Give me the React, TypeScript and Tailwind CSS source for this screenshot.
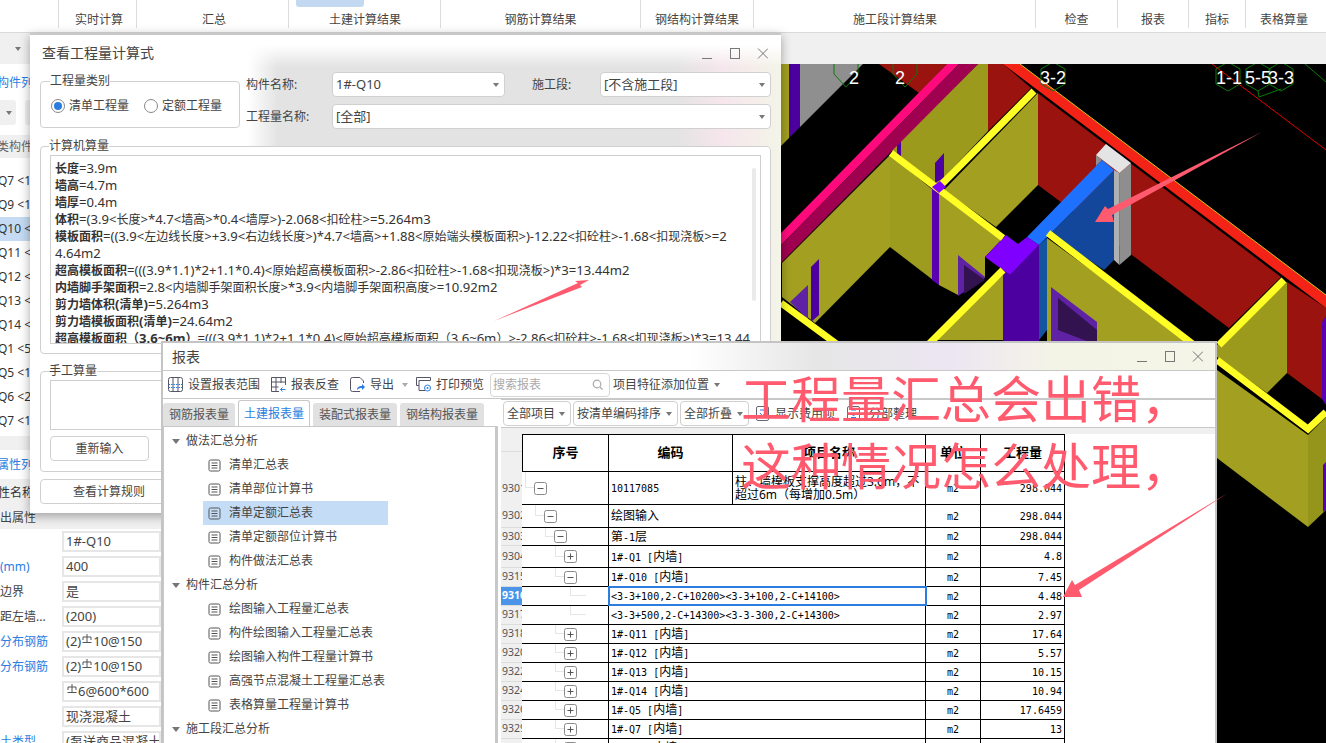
import React from 'react';

const ribbon = [
  { w: 78, label: '实时计算', pad: 3 },
  { w: 152, label: '汇总', pad: 3 },
  { w: 152, label: '土建计算结果', active: true, pad: 1 },
  { w: 200, label: '钢筋计算结果', pad: 0 },
  { w: 113, label: '钢结构计算结果', pad: 0 },
  { w: 282, label: '施工段计算结果', pad: 1 },
  { w: 82, label: '检查', pad: 0 },
  { w: 71, label: '报表', pad: 0 },
  { w: 57, label: '指标', pad: 0 },
  { w: 77, label: '表格算量', pad: 0 },
];

const memberRows = ['Q7 <1', 'Q9 <1', 'Q10 <1', 'Q11 <1', 'Q12 <1', 'Q13 <1', 'Q14 <1', 'Q1 <5', 'Q5 <1', 'Q6 <2', 'Q7 <1'];

const calcLines = [
  ['长度', '=3.9m'],
  ['墙高', '=4.7m'],
  ['墙厚', '=0.4m'],
  ['体积', '=(3.9<长度>*4.7<墙高>*0.4<墙厚>)-2.068<扣砼柱>=5.264m3'],
  ['模板面积', '=((3.9<左边线长度>+3.9<右边线长度>)*4.7<墙高>+1.88<原始端头模板面积>)-12.22<扣砼柱>-1.68<扣现浇板>=2'],
  ['', '4.64m2'],
  ['超高模板面积', '=(((3.9*1.1)*2+1.1*0.4)<原始超高模板面积>-2.86<扣砼柱>-1.68<扣现浇板>)*3=13.44m2'],
  ['内墙脚手架面积', '=2.8<内墙脚手架面积长度>*3.9<内墙脚手架面积高度>=10.92m2'],
  ['剪力墙体积(清单)', '=5.264m3'],
  ['剪力墙模板面积(清单)', '=24.64m2'],
  ['超高模板面积（3.6~6m）', '=(((3.9*1.1)*2+1.1*0.4)<原始超高模板面积（3.6~6m）>-2.86<扣砼柱>-1.68<扣现浇板>)*3=13.44'],
];

const reportTree = [
  { title: '做法汇总分析', items: ['清单汇总表', '清单部位计算书', '清单定额汇总表', '清单定额部位计算书', '构件做法汇总表'] },
  { title: '构件汇总分析', items: ['绘图输入工程量汇总表', '构件绘图输入工程量汇总表', '绘图输入构件工程量计算书', '高强节点混凝土工程量汇总表', '表格算量工程量计算书'] },
  { title: '施工段汇总分析', items: [] },
];

type Row = { no: string; h: number; level: number; kind: '-' | '+' | ''; name: string; unit: string; qty: string; sel?: boolean };

const rows: Row[] = [
  { no: '9302', h: 23, level: 1, kind: '-', name: '绘图输入', unit: 'm2', qty: '298.044' },
  { no: '9303', h: 18, level: 2, kind: '-', name: '第-1层', unit: 'm2', qty: '298.044' },
  { no: '9304', h: 22, level: 3, kind: '+', name: '1#-Q1 [内墙]', unit: 'm2', qty: '4.8' },
  { no: '9315', h: 19, level: 3, kind: '-', name: '1#-Q10 [内墙]', unit: 'm2', qty: '7.45' },
  { no: '9316', h: 19, level: 4, kind: '', name: '<3-3+100,2-C+10200><3-3+100,2-C+14100>', unit: 'm2', qty: '4.48', sel: true },
  { no: '9317', h: 19, level: 4, kind: '', name: '<3-3+500,2-C+14300><3-3-300,2-C+14300>', unit: 'm2', qty: '2.97' },
  { no: '9318', h: 19, level: 3, kind: '+', name: '1#-Q11 [内墙]', unit: 'm2', qty: '17.64' },
  { no: '9320', h: 19, level: 3, kind: '+', name: '1#-Q12 [内墙]', unit: 'm2', qty: '5.57' },
  { no: '9322', h: 19, level: 3, kind: '+', name: '1#-Q13 [内墙]', unit: 'm2', qty: '10.15' },
  { no: '9324', h: 19, level: 3, kind: '+', name: '1#-Q14 [内墙]', unit: 'm2', qty: '10.94' },
  { no: '9326', h: 19, level: 3, kind: '+', name: '1#-Q5 [内墙]', unit: 'm2', qty: '17.6459' },
  { no: '9329', h: 19, level: 3, kind: '+', name: '1#-Q7 [内墙]', unit: 'm2', qty: '13' },
  { no: '9331', h: 19, level: 3, kind: '+', name: '1#-Q9 [内墙]', unit: 'm2', qty: '13' },
];

const Caret = ({ className = '' }: { className?: string }) => (
  <span className={`inline-block w-0 h-0 border-l-[3px] border-r-[3px] border-t-[4px] border-l-transparent border-r-transparent border-t-[#777] ${className}`} />
);

const WinControls = () => (
  <svg width="66" height="12" viewBox="0 0 66 12" fill="none" stroke="#777" strokeWidth="1">
    <path d="M0 10.5h10" />
    <rect x="28.5" y="0.5" width="9" height="10" />
    <path d="M56 0.5l10 10M66 0.5l-10 10" />
  </svg>
);

const Rebar = () => (
  <svg width="10" height="10" viewBox="0 0 10 10" fill="none" stroke="#555" strokeWidth="1" className="inline-block mb-[5px] mx-[1px]">
    <path d="M1 6V3h8v3M5 0v8M0.5 8.5h9" />
  </svg>
);

const DocIcon = () => (
  <svg width="13" height="13" viewBox="0 0 13 13" fill="none" stroke="#555" strokeWidth="1" className="shrink-0">
    <rect x="1" y="1" width="11" height="11" rx="1.5" />
    <path d="M3.5 4h6M3.5 6.5h6M3.5 9h6" />
  </svg>
);

const Toggle = ({ kind }: { kind: '-' | '+' }) => (
  <svg width="13" height="13" viewBox="0 0 13 13" fill="#fff" stroke="#8a8a8a" strokeWidth="1" className="shrink-0">
    <rect x="0.5" y="0.5" width="12" height="12" rx="2" />
    <path d={kind === '-' ? 'M3.5 6.5h6' : 'M3.5 6.5h6M6.5 3.5v6'} stroke="#555" />
  </svg>
);

const CheckIcon = () => (
  <svg width="14" height="15" viewBox="0 0 14 15" fill="none" className="shrink-0">
    <rect x="0.5" y="0.5" width="12" height="14" rx="1.5" stroke="#667" />
    <path d="M4 4h5M4 7l2.5 3L9 7M4 11.5h5" stroke="#2b7de0" />
  </svg>
);

const Scene = () => (
  <svg viewBox="781 64 545 679" width="545" height="679" className="block">
    <rect x="781" y="64" width="545" height="679" fill="#000" />
    {/* far walls */}
    <polygon points="781,64 789,64 789,138 781,146" fill="#a3a021" />
    <polygon points="789,64 800,64 800,127 789,138" fill="#4b009f" />
    <polygon points="800,64 863,64 800,127" fill="#8f8f8f" />
    <polygon points="879,64 947,64 919,93" fill="#9b130e" />
    <polygon points="978,64 988,64 988,131 936,186 891,150" fill="#9b9a1c" />
    <polygon points="897,143 901,140 901,158 897,155" fill="#4b009f" />
    <polygon points="988,64 1003,64 1031,88 988,131" fill="#9b130e" />
    <polygon points="781,233 947,64 959,64 781,245" fill="#ff0a7d" />
    <polygon points="781,245 959,64 978,64 781,263" fill="#a00050" />
    {/* long red wall */}
    <polygon points="1031,88 1281,277 1229,328 1132,255 1038,185 1038,93" fill="#9b130e" />
    <polygon points="1287,282 1326,308 1326,399 1322,399 1287,373" fill="#9b130e" />
    <polygon points="1322,322 1326,316 1326,405 1322,399" fill="#5a00b0" />
    <polygon points="1003,64 1020,64 1326,295 1326,308" fill="#f42318" />
    <polyline points="1020,64 1326,295" fill="none" stroke="#c8c81e" strokeWidth="1" />
    {/* yellow walls */}
    <polygon points="782,263 890,155 890,247 815,323 782,297" fill="#a3a021" />
    <polygon points="890,155 933,190 933,280 890,247" fill="#9e9c1e" />
    <polygon points="939,190 1003,238 985,257 985,277 958,295 939,285" fill="#a3a021" />
    <polygon points="944,190 1038,93 1038,185 996,227" fill="#a3a021" />
    <polygon points="935,163 944,153 944,178 935,183" fill="#4b009f" />
    <polygon points="932,187 939,187 939,285 932,280" fill="#5a00b0" />
    <polygon points="958,255 985,277 985,278 958,296" fill="#5f22a5" />
    <polygon points="964,265 985,280 964,294" fill="#32124f" />
    <polygon points="811,267 819,259 819,315 811,322" fill="#4b009f" />
    <polygon points="790,302 808,285 808,320" fill="#5f22a5" />
    <polygon points="1003,275 1003,340 930,340" fill="#a3a021" />
    <polygon points="1287,282 1287,373 1267,393 1217,357 1217,345" fill="#9b9a1c" />
    <polygon points="1217,370 1308,435 1308,527 1217,458" fill="#a3a021" />
    <polygon points="1308,435 1326,417 1326,510 1308,527" fill="#96951b" />
    <polygon points="1323,465 1326,462 1326,510 1323,512" fill="#5a00b0" />
    {/* blue wall and grey end column */}
    <polygon points="1114,170 1114,260 1104,270 1048,233 1039,245" fill="#12479b" />
    <polygon points="1039,245 1047,238 1047,330 1039,340" fill="#13569f" />
    <polygon points="1096,155 1102,160 1096,166" fill="#8e8e8e" />
    <polygon points="1114,170 1119.5,173 1119.5,265 1114,260" fill="#b0b0b0" />
    <polygon points="1119.5,173 1131,163 1131,255 1119.5,265" fill="#8e8e8e" />
    <polygon points="1106,144 1131,163 1119.5,173 1096,155" fill="#e4e4e4" />
    <polygon points="1102,160 1114,170 1039,245 1027,237" fill="#1e70ff" />
    {/* olive wall in front */}
    <polygon points="1047,238 1194,345 1047,345" fill="#a3a021" />
    <polygon points="1051,287 1097,322 1097,345 1051,345" fill="#5f22a5" />
    <polygon points="1058,298 1097,330 1097,345 1058,330" fill="#32124f" />
    {/* purple column */}
    <polygon points="985,257 1003,270 1003,345 1039,345 1039,245 1010,275" fill="#4b009f" />
    <polygon points="985,257 1006,235 1018,244 1027,237 1039,245 1010,275" fill="#8000ff" />
    {/* yellow wall tops */}
    <g fill="none" stroke="#ffff26" strokeWidth="7">
      <polyline points="781,303 838,345" />
      <polyline points="891,153 1003,238" />
      <polyline points="1034,91 939,187" />
      <polyline points="1003,270 928,345" />
      <polyline points="1048,233 1194,345" />
      <polyline points="1284,280 1219,345" />
      <polyline points="1217,360 1308,429 1326,412" />
    </g>
    <polygon points="932,187 940,181 946,187 939,193" fill="#8000ff" />
    {/* grid labels */}
    <g fill="none" stroke="#0a7a0a" strokeWidth="1">
      <polygon points="846,52 858,59 858,74 846,87 834,74 834,59" />
      <polygon points="905,52 917,59 917,74 905,87 893,74 893,59" />
      <polygon points="1053,62 1065,69 1065,84 1053,91 1041,84 1041,69" />
      <polygon points="1228,62 1240,69 1240,84 1228,91 1216,84 1216,69" />
      <polygon points="1258,62 1270,69 1270,84 1258,91 1246,84 1246,69" />
      <polygon points="1281,62 1293,69 1293,84 1281,91 1269,84 1269,69" />
      <path d="M1259,97l22,-8M1258,91l1,6M1305,64l21,18" />
    </g>
    <line x1="1212" y1="64" x2="1326" y2="150" stroke="#e00000" strokeWidth="1" />
    <g fill="#fff" fontSize="18" fontFamily="Liberation Sans, sans-serif">
      <text x="849" y="84">2</text>
      <text x="895" y="84">2</text>
      <text x="1040" y="84">3-2</text>
      <text x="1216" y="84">1-1</text>
      <text x="1245" y="84">5-5</text>
      <text x="1268" y="84">3-3</text>
    </g>
  </svg>
);

const LeftPanel = () => (
  <div className="w-[161px] shrink-0 bg-white text-[12px] overflow-hidden">
    <div className="h-[36px] flex items-center text-[#2a7de1] pt-[2px] -ml-[3px]">构件列</div>
    <div className="h-[35px] flex items-start gap-[9px]">
      <div className="w-[16px] h-[25px] bg-[#f0f0f0] rounded-r-[3px] flex items-center justify-end pr-[4px]"><Caret /></div>
      <div className="w-[20px] h-[25px] bg-[#f0f0f0] rounded-[3px]" />
    </div>
    <div className="h-[23px] bg-[#f0f0f0] flex items-center text-[#666] -ml-[3px]">类构件</div>
    <div className="h-[11px]" />
    <div>
      {memberRows.map((r, i) => (
        <div key={i} className={`h-[24px] flex items-center whitespace-nowrap -ml-[2px] ${i === 2 ? 'bg-[#c5dbf3]' : ''}`}>{r}</div>
      ))}
    </div>
    <div className="h-[3px]" />
    <div className="h-[14px] bg-[#f0f0f0]" />
    <div className="h-[29px] flex items-center text-[#2a7de1] -ml-[3px]">属性列</div>
    <div className="h-[28px] bg-[#f0f0f0] flex items-center -ml-[2px]">性名称</div>
    <div className="h-[22px] bg-[#f0f0f0] flex items-center text-[#444]">出属性</div>
    {[
      ['', '1#-Q10'],
      ['(mm)', '400'],
      ['边界', '是'],
      ['距左墙...', '(200)'],
      ['分布钢筋', '(2)#10@150'],
      ['分布钢筋', '(2)#10@150'],
      ['', '#6@600*600'],
      ['', '现浇混凝土'],
      ['土类型', '(泵送商品混凝土)'],
    ].map(([label, value], i) => (
      <div key={i} className="h-[25px] flex items-center whitespace-nowrap">
        <div className={`w-[62px] shrink-0 ${label === '边界' || label === '距左墙...' ? 'text-[#444]' : 'text-[#2a7de1]'}`}>{label}</div>
        <div className="flex-1 h-[21px] border-2 border-[#e6e6e6] flex items-center pl-[2px] text-[13px] text-[#444] overflow-hidden">
          {value.split('#').map((part, k) => (
            <React.Fragment key={k}>
              {k > 0 && value !== '1#-Q10' && <Rebar />}
              {k > 0 && value === '1#-Q10' && '#'}
              {part}
            </React.Fragment>
          ))}
        </div>
      </div>
    ))}
  </div>
);

const FieldInput = ({ value, w, caret = true }: { value: string; w: string; caret?: boolean }) => (
  <div className={`${w} h-[25px] bg-white border border-[#d0d0d0] rounded-[4px] flex items-center justify-between pl-[3px] pr-[5px] text-[13px] text-[#444]`}>
    <span>{value}</span>
    {caret && <Caret />}
  </div>
);

// Chinese runs stay at 12px while digits and latin sit a size up, same as the source app
const cjkRuns = (text: string, cjkClass: string) =>
  text.split(/([\u4e00-\u9fa5（）]+)/).map((part, i) => (
    <span key={i} className={i % 2 ? cjkClass : ''}>{part}</span>
  ));

const CalcWindow = () => (
  <div className="absolute left-[30px] top-[33px] w-[751px] h-[480px] border-t-2 border-[#c8c8c8] shadow-[0_3px_10px_rgba(0,0,0,0.35)] text-[12px] text-[#444] bg-[linear-gradient(180deg,#fff_0,#fff_10px,rgba(255,255,255,0)_32px),linear-gradient(90deg,#fff_0,#fff_29%,#e3e3e3_33%,#e3e3e3_86%,#f5e6ec_92%,#f4f4e8_100%)]">
    <div className="h-[37px] flex items-center justify-between pl-[12px] pr-[13px]">
      <span className="text-[14px] -mt-[2px]">查看工程量计算式</span>
      <WinControls />
    </div>
    <div className="flex px-[10px]">
      <fieldset className="w-[200px] h-[56px] border border-[#d0d0d0] rounded-[4px] bg-white">
        <legend className="ml-[9px]">工程量类别</legend>
        <div className="flex items-center pl-[10px] pt-[7px]">
          <span className="w-[14px] h-[14px] rounded-full border border-[#888] flex items-center justify-center">
            <span className="w-[8px] h-[8px] rounded-full bg-[#2b7de0]" />
          </span>
          <span className="ml-[4px]">清单工程量</span>
          <span className="ml-[15px] w-[14px] h-[14px] rounded-full border border-[#888]" />
          <span className="ml-[4px]">定额工程量</span>
        </div>
      </fieldset>
      <div className="flex flex-col gap-[7px] ml-[6px]">
        <div className="flex items-center">
          <span className="w-[86px]">构件名称:</span>
          <FieldInput value="1#-Q10" w="w-[173px]" />
          <span className="w-[95px] pl-[27px]">施工段:</span>
          <FieldInput value="[不含施工段]" w="w-[171px]" />
        </div>
        <div className="flex items-center">
          <span className="w-[86px]">工程量名称:</span>
          <FieldInput value="[全部]" w="w-[439px]" />
        </div>
      </div>
    </div>
    <fieldset className="mx-[10px] mt-[8px] h-[217px] border border-[#d0d0d0] rounded-[4px] bg-white px-[9px]">
      <legend className="ml-[-1px]">计算机算量</legend>
      <div className="relative h-[189px] border border-[#cfcfcf] pl-[4px] pt-[4px] overflow-hidden leading-[17px] text-[13.1px] text-[#333] whitespace-nowrap">
        {calcLines.map(([label, rest], i) => (
          <div key={i} className="h-[17px]">
            <span className="font-bold">{cjkRuns(label, 'text-[12px]')}</span>
            {cjkRuns(rest, 'text-[12px]')}
          </div>
        ))}
        <div className="absolute right-[4px] top-[12px] w-[4px] h-[133px] rounded-full bg-[#eaeaea]" />
      </div>
    </fieldset>
    <fieldset className="mx-[10px] mt-[8px] h-[110px] border border-[#d0d0d0] rounded-[4px] bg-white px-[9px]">
      <legend className="ml-[-1px]">手工算量</legend>
      <div className="h-[50px] border border-[#cfcfcf]" />
      <button className="mt-[6px] w-[99px] h-[25px] border border-[#d0d0d0] rounded-[4px] bg-white">重新输入</button>
    </fieldset>
    <button className="mt-[7px] ml-[10px] w-[138px] h-[25px] border border-[#d0d0d0] rounded-[4px] bg-white">查看计算规则</button>
  </div>
);

const ToolItem = ({ icon, label }: { icon: React.ReactNode; label: string }) => (
  <div className="flex items-center gap-[5px] whitespace-nowrap">
    {icon}
    <span>{label}</span>
  </div>
);

const toolStroke = { fill: 'none', stroke: '#556', strokeWidth: 1 };

const ReportToolbar = () => (
  <div className="h-[29px] bg-white border-y border-[#c8c8c8] flex items-center pl-[5px] text-[12px] text-[#444]">
    <ToolItem
      label="设置报表范围"
      icon={
        <svg width="15" height="15" viewBox="0 0 15 15" {...toolStroke}>
          <rect x="0.5" y="0.5" width="14" height="14" rx="2" />
          <path d="M5 .5v14M10 .5v14" />
          <path d="M.5 7.5h14M.5 10.5h14" stroke="#2b7de0" strokeDasharray="1.5 1" />
        </svg>
      }
    />
    <div className="w-[11px]" />
    <ToolItem
      label="报表反查"
      icon={
        <svg width="15" height="15" viewBox="0 0 15 15" {...toolStroke}>
          <path d="M8 14.5H.5V.5h14V8M5 .5v14M10 .5V6M.5 5h14M.5 10h7" />
          <path d="M14.5 12.5h-5l2-2m-2 2l2 2" stroke="#2b7de0" />
        </svg>
      }
    />
    <div className="w-[11px]" />
    <ToolItem
      label="导出"
      icon={
        <svg width="15" height="15" viewBox="0 0 15 15" {...toolStroke}>
          <path d="M10 14.5H2.5a2 2 0 0 1-2-2v-10a2 2 0 0 1 2-2H10l3.5 3.5V6" />
          <path d="M7 13c0-3 2-4 5-4V7l3 3-3 3v-2c-2 0-4 .5-5 2z" fill="#2b7de0" stroke="none" />
        </svg>
      }
    />
    <Caret className="ml-[8px] border-t-[#aaa]" />
    <div className="w-[8px]" />
    <ToolItem
      label="打印预览"
      icon={
        <svg width="15" height="15" viewBox="0 0 15 15" {...toolStroke}>
          <path d="M3 8.5H.5V.5h14v3M3 3.5h11.5M3 3.5v10h6" />
          <circle cx="11.5" cy="11" r="3" stroke="#2b7de0" />
          <circle cx="11.5" cy="11" r="1" fill="#2b7de0" stroke="none" />
        </svg>
      }
    />
    <div className="ml-[6px] w-[120px] h-[24px] border border-[#d8d8d8] rounded-[4px] flex items-center justify-between pl-[2px] pr-[6px] text-[#aaa]">
      <span>搜索报表</span>
      <svg width="11" height="11" viewBox="0 0 11 11" fill="none" stroke="#aaa" strokeWidth="1.2">
        <circle cx="5" cy="5" r="3.8" />
        <path d="M8 8l2.5 2.5" />
      </svg>
    </div>
    <span className="ml-[3px]">项目特征添加位置</span>
    <Caret className="ml-[5px]" />
  </div>
);

const ReportTabs = () => (
  <div className="h-[27px] flex items-end gap-[3px] text-[12px]">
    <div className="w-[72px] h-[23px] bg-[#e1e1e1] rounded-t-[3px] flex items-center justify-center text-[#555]">钢筋报表量</div>
    <div className="w-[72px] h-[26px] bg-white border border-b-0 border-[#c8c8c8] rounded-t-[3px] flex items-center justify-center text-[#2b7de0]">土建报表量</div>
    <div className="w-[84px] h-[23px] bg-[#e1e1e1] rounded-t-[3px] flex items-center justify-center text-[#555]">装配式报表量</div>
    <div className="w-[84px] h-[23px] bg-[#e1e1e1] rounded-t-[3px] flex items-center justify-center text-[#555]">钢结构报表量</div>
  </div>
);

const ReportTree = () => (
  <div className="flex-1 bg-white border-l border-r-[3px] border-t border-[#c8c8c8] text-[12px] text-[#444] pt-[2px]">
    {reportTree.map((group) => (
      <div key={group.title}>
        <div className="h-[24px] flex items-center pl-[8px]">
          <Caret className="mr-[6px] border-l-[4px] border-r-[4px] border-t-[5px]" />
          {group.title}
        </div>
        {group.items.map((item) => (
          <div key={item} className={`h-[24px] ml-[39px] w-[185px] flex items-center gap-[8px] pl-[5px] whitespace-nowrap ${item === '清单定额汇总表' ? 'bg-[#c5dcf6]' : ''}`}>
            <DocIcon />
            {item}
          </div>
        ))}
      </div>
    ))}
  </div>
);

const FilterBox = ({ label, w }: { label: string; w: string }) => (
  <div className={`${w} h-[25px] border border-[#d0d0d0] rounded-[4px] flex items-center justify-between pl-[3px] pr-[5px]`}>
    <span>{label}</span>
    <Caret />
  </div>
);

const ReportTable = () => (
  <div className="text-[12px] text-black">
    <div className="flex h-[38px]">
      <div className="w-[21px] bg-[#f0f0f0]">
        <div className="h-[18px] border-b border-[#dcdcdc]" />
      </div>
      <div className="w-[543px] flex border border-black font-bold text-[13px]">
        <div className="w-[86px] border-r border-black flex items-center justify-center">序号</div>
        <div className="w-[124px] border-r border-black flex items-center justify-center">编码</div>
        <div className="w-[193px] border-r border-black flex items-center justify-center">项目名称</div>
        <div className="w-[55px] border-r border-black flex items-center justify-center">单位</div>
        <div className="flex-1 flex items-center justify-center">工程量</div>
      </div>
    </div>
    <div className="flex h-[33px]">
      <div className="w-[21px] bg-[#f0f0f0] flex items-center pl-[1px] overflow-hidden text-[10.5px] text-[#555]">9301</div>
      <div className="w-[543px] flex border-b border-black">
        <div className="w-[87px] border-r border-black flex items-center pl-[3px]">
          <div className="w-[9px] h-1/2 self-start border-l border-b border-[#e6e6e6]" />
          <Toggle kind="-" />
        </div>
        <div className="w-[124px] border-r border-black flex items-center pl-[2px] font-['DejaVu_Sans_Mono',monospace] text-[10px]">10117085</div>
        <div className="w-[193px] border-r border-black flex items-center px-[2px] leading-[13px] text-[12px]">柱、墙模板支撑高度超过3.6m，不超过6m（每增加0.5m）</div>
        <div className="w-[55px] border-r border-black flex items-center justify-center font-['DejaVu_Sans_Mono',monospace] text-[10px]">m2</div>
        <div className="w-[84px] border-r border-black flex items-center justify-end pr-[2px] font-['DejaVu_Sans_Mono',monospace] text-[10px]">298.044</div>
      </div>
    </div>
    {rows.map((r) => (
      <div key={r.no} className="flex" style={{ height: r.h }}>
        <div className={`w-[21px] flex items-center pl-[1px] overflow-hidden text-[10.5px] border-b border-[#dcdcdc] ${r.sel ? 'bg-[#4a95e8] text-white font-bold' : 'bg-[#f0f0f0] text-[#555]'}`}>{r.no}</div>
        <div className="w-[543px] flex border-b border-black">
          <div className="w-[87px] border-r border-black flex items-center" style={{ paddingLeft: r.kind ? 3 + r.level * 10 : 48 }}>
            {r.kind ? (
              <>
                <div className="w-[9px] h-1/2 self-start border-l border-b border-[#e6e6e6]" />
                <Toggle kind={r.kind} />
              </>
            ) : (
              <div className="w-[16px] h-[9px] mb-[9px] border-l border-b border-[#e6e6e6]" />
            )}
          </div>
          <div className={`w-[317px] border-r border-black flex items-center pl-[2px] whitespace-nowrap font-['DejaVu_Sans_Mono','Noto_Sans_CJK_SC',monospace] text-[10px] ${r.sel ? 'outline-2 -outline-offset-1 outline-[#2b7de0]' : ''}`}>
            <span>{cjkRuns(r.name, 'text-[12px]')}</span>
          </div>
          <div className="w-[55px] border-r border-black flex items-center justify-center font-['DejaVu_Sans_Mono',monospace] text-[10px]">{r.unit}</div>
          <div className="w-[84px] border-r border-black flex items-center justify-end pr-[2px] font-['DejaVu_Sans_Mono',monospace] text-[10px]">{r.qty}</div>
        </div>
      </div>
    ))}
  </div>
);

const ReportWindow = () => (
  <div className="absolute left-[161px] top-[341px] w-[1056px] h-[402px] bg-white border-t-2 border-x-2 border-[#c4c4c4] overflow-hidden">
    <div className="h-[27px] flex items-center justify-between pl-[9px] pr-[12px] text-[14px] text-[#444] bg-[linear-gradient(90deg,#fff_0,#fff_50%,#e6e6e6_62%,#ece6f2_75%,#f4f4e6_85%,#f4f4e8_100%)]">
      <span>报表</span>
      <WinControls />
    </div>
    <ReportToolbar />
    <div className="flex h-[344px]">
      <div className="w-[335px] shrink-0 flex flex-col">
        <ReportTabs />
        <ReportTree />
      </div>
      <div className="flex-1 min-w-0 pl-[3px]">
        <div className="h-[29px] border-y border-[#c8c8c8] flex items-center gap-[2px] pl-[2px] text-[12px] text-[#444]">
          <FilterBox label="全部项目" w="w-[68px]" />
          <FilterBox label="按清单编码排序" w="w-[105px]" />
          <FilterBox label="全部折叠" w="w-[69px]" />
          <div className="ml-[5px]"><CheckIcon /></div>
          <span className="ml-[3px]">显示费用项</span>
          <div className="ml-[10px]"><CheckIcon /></div>
          <span className="ml-[6px]">分部整理</span>
        </div>
        <div className="h-[6px] bg-[#f0f0f0]" />
        <ReportTable />
      </div>
    </div>
  </div>
);

const Arrows = () => (
  <svg viewBox="0 0 1326 743" width="1326" height="743" className="absolute left-0 top-0 pointer-events-none" fill="#ff5a6e">
    <polygon points="1262,132 1108,209 1105,206 1095,222 1114,222 1112,215" />
    <polygon points="1228,493 1075,585 1072,580 1063,597 1082,597 1079,590" />
    <polygon points="494,321 578,283 575,281 589,280 580,285 582,287" />
  </svg>
);

export default function App() {
  return (
    <div className="relative w-[1326px] h-[743px] overflow-hidden bg-white font-['Noto_Sans','Noto_Sans_CJK_SC',sans-serif] text-[#333]">
      {/* ribbon */}
      <div className="h-[33px] pl-[58px] border-b border-[#d9d9d9] flex text-[12px] text-[#444]">
        {ribbon.map((r) => (
          <div key={r.label} style={{ width: r.w, paddingLeft: r.pad }} className="relative h-[28px] border-l border-[#dcdcdc] flex items-end justify-center leading-[16px] shrink-0">
            {r.active && <div className="absolute left-[7px] top-0 w-[68px] h-[7px] bg-[#c3d9f1] rounded-b-[3px]" />}
            {r.label}
          </div>
        ))}
      </div>
      <div className="h-[31px] bg-[#f0f0f0] flex items-center pl-[15px]">
        <Caret />
      </div>
      <div className="flex">
        <LeftPanel />
        <div className="w-[620px] shrink-0" />
        <Scene />
      </div>
      <CalcWindow />
      <ReportWindow />
      <Arrows />
      {/* annotation typed over the screenshot */}
      <div className="absolute left-[741px] top-[366px] text-[50px] leading-[67px] text-[#ff5a6e] whitespace-nowrap pointer-events-none">
        <div>工程量汇总会出错，</div>
        <div>这种情况怎么处理，</div>
      </div>
    </div>
  );
}
